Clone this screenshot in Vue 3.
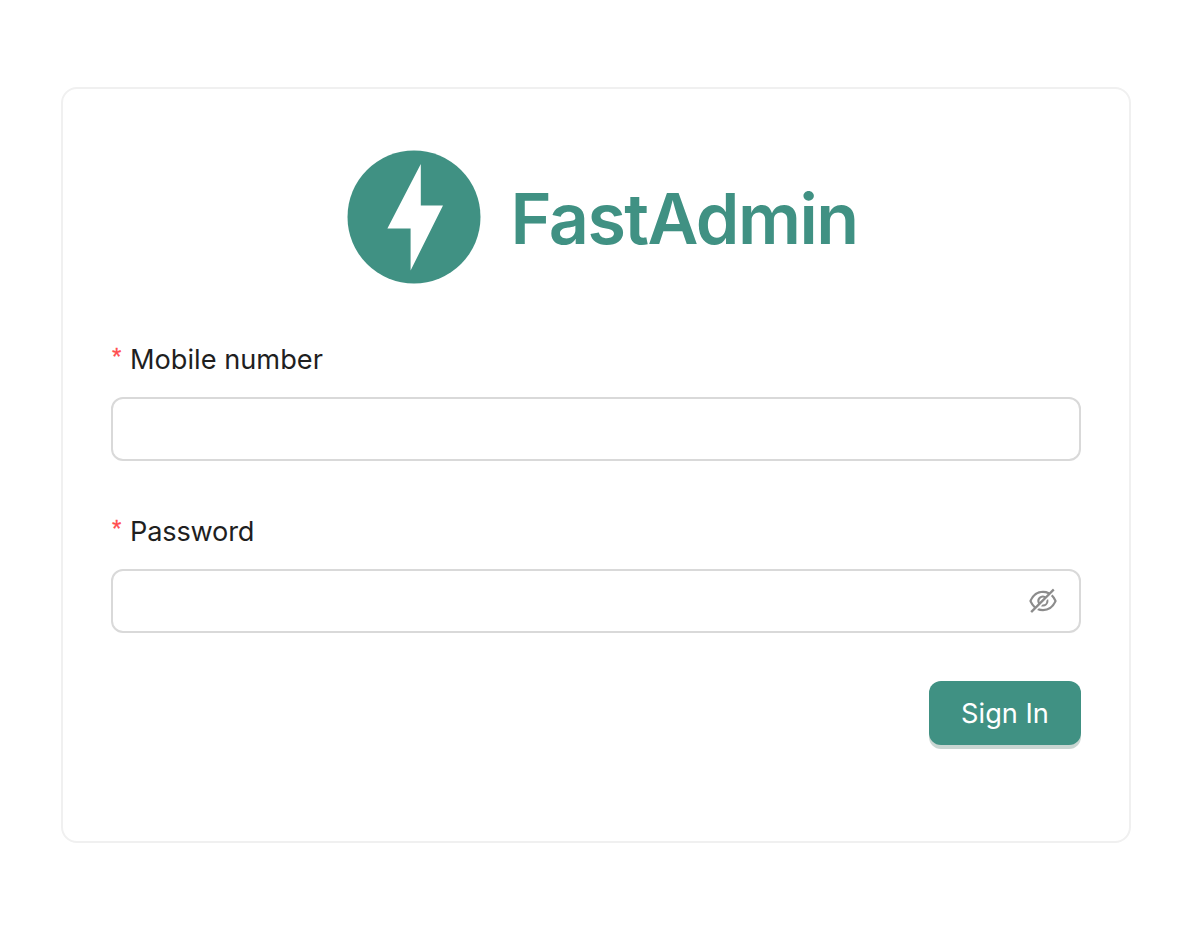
<script setup>
import { ref } from 'vue'

const mobile = ref('')
const password = ref('')
const visible = ref(false)
</script>

<template>
  <main class="page">
    <section class="card">
      <header class="brand">
        <svg class="logo" viewBox="0 0 134 134" aria-hidden="true">
          <circle cx="67" cy="67" r="66.5" fill="#409183" />
          <path d="M73.8 14V55.5H96L63.6 120.5V78.5H40.4Z" fill="#fff" />
        </svg>
        <h1 class="title">FastAdmin</h1>
      </header>
      <form class="form" @submit.prevent>
        <div class="field">
          <label class="label" for="mobile"><span class="star">*</span><span>Mobile number</span></label>
          <div class="control"><input id="mobile" v-model="mobile" type="text" /></div>
        </div>
        <div class="field">
          <label class="label" for="password"><span class="star">*</span><span class="password-label">Password</span></label>
          <div class="control">
            <input id="password" v-model="password" :type="visible ? 'text' : 'password'" />
            <svg class="eye" viewBox="64 64 896 896" @click="visible = !visible">
              <path d="M942.2 486.2Q889.47 375.11 816.7 305l-50.88 50.88C807.31 395.53 843.45 447.4 874.7 512 791.5 684.2 673.4 766 512 766q-72.67 0-133.87-22.38L323 798.75Q408 838 512 838q288.3 0 430.2-300.3a60.29 60.29 0 000-51.5zm-63.57-320.64L836 122.88a8 8 0 00-11.32 0L715.31 232.2Q624.86 186 512 186q-288.3 0-430.2 300.3a60.3 60.3 0 000 51.5q56.69 119.4 136.5 191.41L112.48 835a8 8 0 000 11.31L155.17 889a8 8 0 0011.31 0l712.15-712.12a8 8 0 000-11.32zM149.3 512C232.6 339.8 350.7 258 512 258c54.54 0 104.13 9.36 149.12 28.39l-70.3 70.3a176 176 0 00-238.13 238.13l-83.42 83.42C223.1 637.49 183.3 582.28 149.3 512zm246.7 0a112.11 112.11 0 01146.2-106.69L401.31 546.2A112 112 0 01396 512z" />
              <path d="M508 624c-3.46 0-6.87-.16-10.25-.47l-52.82 52.82a176.09 176.09 0 00227.42-227.42l-52.82 52.82c.31 3.38.47 6.79.47 10.25a111.94 111.94 0 01-112 112z" />
            </svg>
          </div>
        </div>
        <button class="submit" type="submit">Sign In</button>
      </form>
    </section>
  </main>
</template>

<style>
body {
  margin: 0;
  background: #fff;
}
</style>

<style scoped>
.page {
  box-sizing: border-box;
  height: 930px;
  padding: 87px 59px 87px 61px;
  font-family: Inter, "Liberation Sans", sans-serif;
  color: #1f1f1f;
}
.card {
  box-sizing: border-box;
  height: 756px;
  padding: 61px 48px 0;
  border: 2px solid #f0f0f0;
  border-radius: 16px;
}
.brand {
  display: flex;
  align-items: center;
  height: 134px;
  padding-left: 236px;
}
.logo {
  width: 134px;
  height: 134px;
  flex: none;
}
.title {
  margin: 3px 0 0 29.5px;
  font-size: 70px;
  line-height: 88px;
  font-weight: 600;
  letter-spacing: -1.55px;
  color: #409183;
  white-space: nowrap;
}
.form {
  display: flex;
  flex-direction: column;
  gap: 48px;
  margin-top: 53px;
}
.label {
  display: flex;
  align-items: center;
  box-sizing: border-box;
  height: 44px;
  margin-bottom: 16px;
  padding-top: 1px;
  font-size: 27.2px;
  line-height: 44px;
}
.password-label {
  letter-spacing: -0.2px;
}
.star {
  width: 18px;
  height: 44px;
  margin: -5px 0 0 1px;
  font-family: "Liberation Sans", sans-serif;
  font-size: 24px;
  color: #ff4d4f;
  -webkit-text-stroke: 0.3px #ff4d4f;
}
.control {
  box-sizing: border-box;
  display: flex;
  align-items: center;
  height: 64px;
  padding: 0 22px;
  border: 2px solid #d9d9d9;
  border-radius: 12px;
}
.control input {
  flex: 1;
  min-width: 0;
  padding: 0;
  border: 0;
  outline: 0;
  background: transparent;
  font: 28px Inter, sans-serif;
}
.eye {
  width: 28px;
  height: 28px;
  fill: #8c8c8c;
  cursor: pointer;
}
.submit {
  align-self: flex-end;
  box-sizing: border-box;
  width: 152px;
  height: 64px;
  padding: 1px 0 0;
  border: 0;
  border-radius: 12px;
  background: #409183;
  box-shadow: 0 4px 0 #c9d6d2;
  color: #fff;
  font: 27.2px/63px Inter, sans-serif;
}
</style>
